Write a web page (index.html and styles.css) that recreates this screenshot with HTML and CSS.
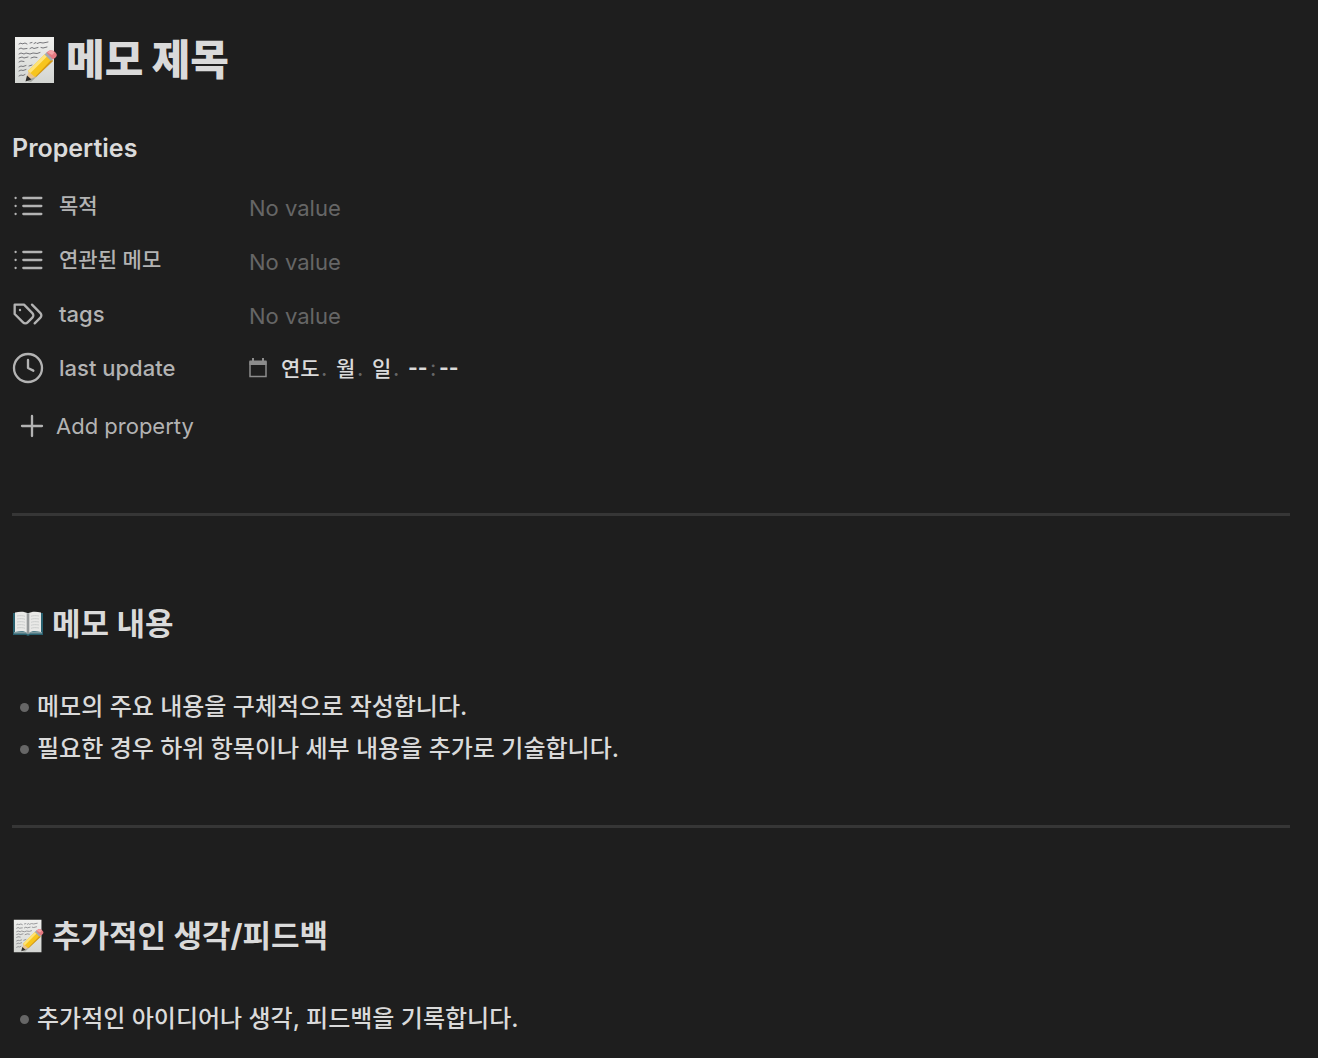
FILE: index.html
```html
<!DOCTYPE html>
<html lang="ko">
<head>
    <meta charset="UTF-8">
    <meta name="viewport" content="width=device-width, initial-scale=1.0">
    <title>메모 제목</title>
    <link rel="stylesheet" href="styles.css">
</head>
<body>
    <!-- Shared icons -->
    <svg class="sprite" aria-hidden="true">
        <defs>
            <linearGradient id="paper" x1="0" y1="0" x2="0" y2="1">
                <stop offset="0" stop-color="#f0f0ee"/>
                <stop offset="1" stop-color="#d3d5d2"/>
            </linearGradient>
        </defs>
        <symbol id="memo" viewBox="0 0 44 48">
            <path fill="url(#paper)" d="M2 1h39v46H2z"/>
            <path fill="none" stroke="#77777b" stroke-width="1" stroke-linecap="round" d="M6 8l2-1 1 1 3-1 2 1m3-1l2-.5m2 1l2-1 1 1 3-1 3 .5 5-1M6 13l2-1 2 1 4-.5m3 0l2-1 2 1 4-1m3 0l2 .5 4-1M6 18l2-1 3 1 2-1 4 1 3-1 4 .5 3-1M6 22l3-1 2 1 4-1m3 1l3-1 3 .5M6 26l2-1 3 .5M6 31l2-1 2 .5 3-1m3 .5l3-1M6 35l2-1 2 .5 3-1M6 40l2-1 2 .5 2-1"/>
            <path fill="#787a72" opacity=".5" d="M14 45L38 24l2 1-22 21z"/>
            <path fill="#e8c391" d="M13 44l3-10 7 7z"/>
            <path fill="#2e2c2a" d="M12.500 45.500l1.500-6 4.500 4z"/>
            <path fill="#d99a10" d="M21 39L38 22l2 3-17 16z"/>
            <path fill="#f7c51e" d="M15 35L32 18l6.500 5.500L22 41z"/>
            <path fill="#ffe377" d="M15 35L32 18l2.500 2L17.500 37z"/>
            <path fill="#a5a9ac" d="M31.500 18.500l2.500-2.500 6.500 6.500-2.500 2.500z"/>
            <path fill="#e57980" d="M33.500 16.500l2-1.500c2-1.500 5-.5 7 1.500s1.500 3.500 0 5l-2.500 2z"/>
            <path fill="#f4a2a4" d="M34.500 16.500l1.500-1.500c2-1 4.500 0 5.500 1.500l-2.500 2.500z"/>
        </symbol>
        <symbol id="book" viewBox="0 0 32 26">
            <path fill="#28606f" d="M1 2h30v22H18l-2 1-2-1H1z"/>
            <path fill="#7e9aa0" d="M2 21h28v1.500H18l-2 1-2-1H2z"/>
            <path fill="#e9e9e7" d="M3 1.500c5-1 10-1 13 1 3-2 8-2 13-1V21c-5-1-10-1-13 1-3-2-8-2-13-1z"/>
            <path fill="#b5b8b8" d="M14.500 2l1.500.7 1.500-.7v19.500L16 22.500l-1.500-1z"/>
            <path stroke="#777b7d" stroke-width="1" d="M16 2.500v20"/>
            <path fill="none" stroke="#c4c6c7" stroke-width=".8" d="M5 5c3-.5 6-.5 8 .3M5 8c3-.5 6-.5 8 .3M5 11c3-.5 6-.5 8 .3M5 14c3-.5 6-.5 8 .3M5 17c3-.5 6-.5 8 .3M19 5.300c2-.8 5-.8 8-.3M19 8.300c2-.8 5-.8 8-.3M19 11.300c2-.8 5-.8 8-.3M19 14.300c2-.8 5-.8 8-.3M19 17.300c2-.8 5-.8 8-.3"/>
        </symbol>
        <symbol id="list" viewBox="0 0 24 24">
            <path d="M8.500 6h13.500M8.500 12h13.500M8.500 18h13.500M2.700 6h.01M2.700 12h.01M2.700 18h.01"/>
        </symbol>
    </svg>

    <main class="note">
        <h1><svg class="emoji-lg" role="img" aria-label="메모"><use href="#memo"/></svg>메모 제목</h1>

        <section class="properties">
            <h3>Properties</h3>
            <div class="property">
                <svg class="icon" aria-hidden="true"><use href="#list"/></svg>
                <label class="ko" for="purpose">목적</label>
                <input id="purpose" class="value" type="text" placeholder="No value">
            </div>
            <div class="property">
                <svg class="icon" aria-hidden="true"><use href="#list"/></svg>
                <label class="ko" for="related">연관된 메모</label>
                <input id="related" class="value" type="text" placeholder="No value">
            </div>
            <div class="property">
                <svg class="icon" viewBox="0 0 24 24" aria-hidden="true">
                    <path d="M9 5H2v7l6.290 6.290c.940.940 2.480.940 3.420 0l3.580-3.580c.940-.940.940-2.480 0-3.420L9 5Z"/>
                    <path d="M6 9.010V9"/>
                    <path d="m15 5 6.300 6.300a2.400 2.400 0 0 1 0 3.400L17 19"/>
                </svg>
                <label for="tags">tags</label>
                <input id="tags" class="value" type="text" placeholder="No value">
            </div>
            <div class="property">
                <svg class="icon" viewBox="0 0 24 24" aria-hidden="true">
                    <circle cx="12" cy="12" r="10.500"/>
                    <path d="M12 6v6l4 2"/>
                </svg>
                <label for="year">last update</label>
                <div class="datetime">
                    <svg class="calendar" viewBox="0 0 18 20" aria-hidden="true">
                        <path fill="none" stroke="#8c8c8c" stroke-width="1.500" d="M1 4h16v14.500H1z"/>
                        <path fill="#8c8c8c" d="M.5 2.500h17V7H.5zM3 0h2v3H3zM13 0h2v3h-2z"/>
                    </svg>
                    <input id="year" class="year" type="text" value="연도" aria-label="연도"><span>.</span>
                    <input class="day" type="text" value="월" aria-label="월"><span>.</span>
                    <input class="day" type="text" value="일" aria-label="일"><span>.</span>
                    <input class="time" type="text" value="--" aria-label="시"><span class="colon">:</span><input class="time" type="text" value="--" aria-label="분">
                </div>
            </div>
            <button class="add-property" type="button">
                <svg class="icon" viewBox="0 0 24 24" aria-hidden="true"><path d="M4.500 12h15M12 4.500v15"/></svg>
                Add property
            </button>
        </section>

        <hr>

        <h2><svg class="emoji" role="img" aria-label="책"><use href="#book"/></svg>메모 내용</h2>
        <ul>
            <li>메모의 주요 내용을 구체적으로 작성합니다.</li>
            <li>필요한 경우 하위 항목이나 세부 내용을 추가로 기술합니다.</li>
        </ul>

        <hr>

        <h2><svg class="emoji" role="img" aria-label="메모"><use href="#memo"/></svg>추가적인 생각/피드백</h2>
        <ul>
            <li>추가적인 아이디어나 생각, 피드백을 기록합니다.</li>
        </ul>
    </main>
</body>
</html>
```
FILE: styles.css
```css
* {
    box-sizing: border-box;
}

body {
    margin: 0;
    background-color: #1e1e1e;
    color: #dadada;
    font-family: Inter, "Noto Sans CJK KR", sans-serif;
    font-size: 24px;
}

.sprite {
    position: absolute;
    width: 0;
    height: 0;
}

.note {
    padding: 33px 28px 19px 12px;
}

h1, h2, h3 {
    margin: 0;
}

h1, h2 {
    display: flex;
    align-items: center;
}

h1 {
    gap: 8px;
    font-size: 42px;
    font-weight: 900;
    line-height: 54px;
}

h2 {
    gap: 8px;
    font-size: 31px;
    line-height: 44px;
}

h3 {
    font-size: 25px;
    font-weight: 600;
    line-height: 32px;
    margin-bottom: 15px;
}

.emoji-lg {
    width: 46px;
    height: 48px;
}

.emoji {
    width: 32px;
    height: 34px;
}

.properties {
    margin-top: 45px;
}

.property {
    display: flex;
    align-items: center;
    height: 54px;
    font-size: 22px;
    color: #b3b3b3;
}

.property label {
    width: 190px;
    margin-left: 15px;
    font-weight: 500;
}

.property .ko {
    padding-bottom: 4px;
    font-size: 21px;
}

.icon {
    flex: none;
    width: 32px;
    height: 32px;
    fill: none;
    stroke: #b3b3b3;
    stroke-width: 1.75;
    stroke-linecap: round;
    stroke-linejoin: round;
}

input {
    padding: 0;
    border: none;
    outline: none;
    background: none;
    color: #dadada;
    font: inherit;
}

.value {
    flex: 1;
    padding-top: 4px;
}

.value::placeholder {
    color: #666;
}

/* Date and time field */
.datetime {
    display: flex;
    align-items: center;
    color: #666;
}

.datetime input {
    padding-bottom: 2px;
    font-size: 21px;
    font-weight: 500;
}

.calendar {
    width: 18px;
    height: 20px;
    margin-right: 14px;
}

.datetime .year {
    width: 40px;
}

.datetime .day {
    width: 21px;
    margin-left: 8px;
}

.datetime .time {
    width: 22px;
    font-weight: 700;
}

.datetime span {
    width: 7px;
}

.datetime span + .time {
    margin-left: 8px;
}

.datetime .colon + .time {
    margin-left: 2px;
}

.add-property {
    display: flex;
    align-items: center;
    gap: 8px;
    height: 40px;
    margin-top: 11px;
    padding: 0 4px;
    border: none;
    background: none;
    color: #b3b3b3;
    font: inherit;
    font-size: 22px;
    cursor: pointer;
}

hr {
    height: 3px;
    margin: 56px 0 86px;
    border: none;
    background-color: #363636;
}

.properties + hr {
    margin-top: 67px;
}

ul {
    margin: 40px 0 0;
    padding: 0;
    list-style: none;
}

ul + hr {
    margin-top: 55px;
}

li {
    display: flex;
    align-items: center;
    gap: 8px;
    padding-left: 8px;
    font-weight: 500;
    line-height: 42px;
}

li::before {
    content: "";
    flex: none;
    width: 9px;
    height: 9px;
    border-radius: 50%;
    background-color: #666;
}
```
